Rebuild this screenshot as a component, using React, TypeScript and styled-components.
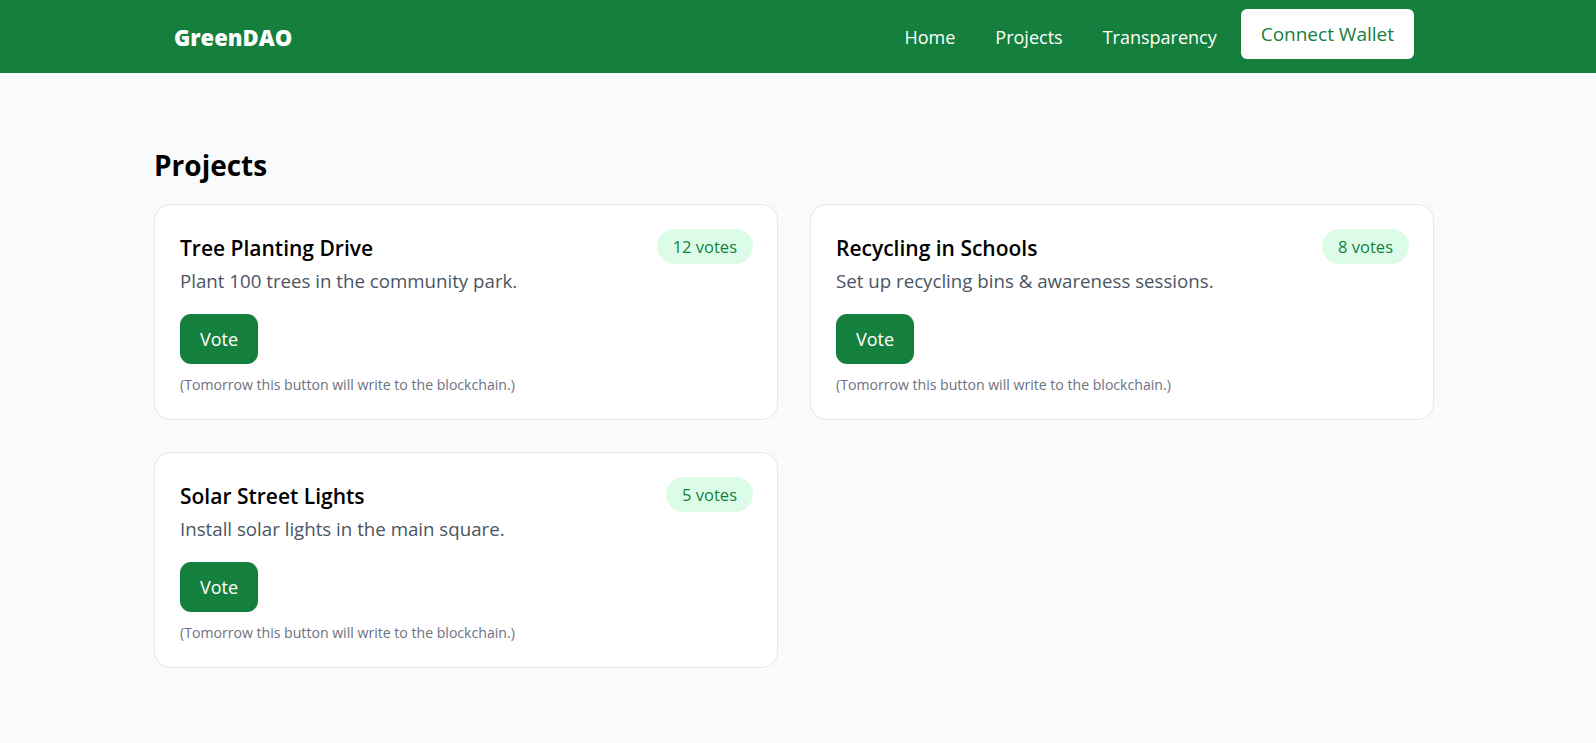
import React from 'react';
import styled, { createGlobalStyle } from 'styled-components';

const GlobalStyle = createGlobalStyle`
  * { box-sizing: border-box; }
  body {
    margin: 0;
    background: #f9fafb;
    font-family: "Open Sans", "Noto Sans", sans-serif;
    color: #111827;
  }
`;

const Container = styled.div`
  width: 1280px;
  margin-left: 154px;
`;

const Header = styled.header`
  background: #15803d;
  height: 73px;
`;

const HeaderInner = styled(Container)`
  height: 100%;
  padding: 0 20px;
  display: flex;
  align-items: center;
  justify-content: space-between;
`;

const Logo = styled.div`
  color: #fff;
  font-weight: 800;
  font-size: 22px;
  line-height: 30px;
`;

const Nav = styled.nav`
  display: flex;
  align-items: center;
  gap: 40px;
`;

const NavLink = styled.a`
  color: #fff;
  font-size: 18px;
  text-decoration: none;
  cursor: pointer;
`;

const WalletButton = styled.button`
  background: #fff;
  color: #15803d;
  border: none;
  border-radius: 6px;
  height: 50px;
  padding: 0 20px;
  margin: 0 0 5px -16px;
  font-family: inherit;
  font-size: 19px;
  cursor: pointer;
`;

const Main = styled(Container)`
  padding-top: 75px;
`;

const Title = styled.h1`
  margin: 0 0 22px;
  font-size: 28px;
  font-weight: 700;
  color: #000;
  line-height: 34px;
`;

const Grid = styled.div`
  display: grid;
  grid-template-columns: 1fr 1fr;
  gap: 32px;
`;

const Card = styled.div`
  background: #fff;
  border: 1px solid #e5e7eb;
  border-radius: 16px;
  padding: 24px 24px 24px 25px;
`;

const CardTop = styled.div`
  display: flex;
  justify-content: space-between;
  align-items: flex-start;
`;

const CardTitle = styled.h2`
  margin: 5px 0 0;
  font-size: 21px;
  font-weight: 600;
  line-height: 28px;
  color: #000;
`;

const Badge = styled.span`
  background: #dcfce7;
  color: #15803d;
  border-radius: 999px;
  padding: 0 16px;
  height: 35px;
  line-height: 35px;
  font-size: 16.5px;
`;

const Desc = styled.p`
  margin: 4px 0 20px;
  font-size: 18.7px;
  line-height: 26px;
  color: #4b5563;
`;

const VoteButton = styled.button`
  background: #15803d;
  color: #fff;
  border: none;
  border-radius: 11px;
  height: 50px;
  padding: 0 20px;
  font-family: inherit;
  font-size: 18px;
  cursor: pointer;
`;

const Note = styled.p`
  margin: 11px 0 0;
  font-size: 14.1px;
  color: #6b7280;
  line-height: 20px;
`;

const projects = [
  { title: 'Tree Planting Drive', desc: 'Plant 100 trees in the community park.', votes: 12 },
  { title: 'Recycling in Schools', desc: 'Set up recycling bins & awareness sessions.', votes: 8 },
  { title: 'Solar Street Lights', desc: 'Install solar lights in the main square.', votes: 5 },
];

const App: React.FC = () => (
  <>
    <GlobalStyle />
    <Header>
      <HeaderInner>
        <Logo>GreenDAO</Logo>
        <Nav>
          <NavLink>Home</NavLink>
          <NavLink>Projects</NavLink>
          <NavLink>Transparency</NavLink>
          <WalletButton>Connect Wallet</WalletButton>
        </Nav>
      </HeaderInner>
    </Header>
    <Main>
      <Title>Projects</Title>
      <Grid>
        {projects.map((p) => (
          <Card key={p.title}>
            <CardTop>
              <CardTitle>{p.title}</CardTitle>
              <Badge>{p.votes} votes</Badge>
            </CardTop>
            <Desc>{p.desc}</Desc>
            <VoteButton>Vote</VoteButton>
            <Note>(Tomorrow this button will write to the blockchain.)</Note>
          </Card>
        ))}
      </Grid>
    </Main>
  </>
);

export default App;
